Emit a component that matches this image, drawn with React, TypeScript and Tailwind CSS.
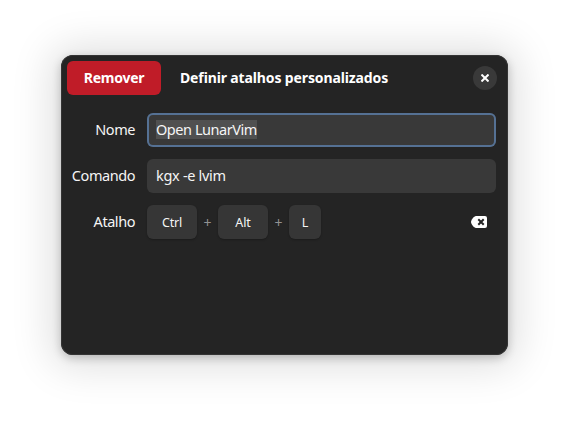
import React from "react";

function Label({ children }: { children: React.ReactNode }) {
  return <label className="w-[74px] shrink-0 pb-0.5 text-right whitespace-nowrap">{children}</label>;
}

function Key({ children, className }: { children: string; className: string }) {
  return (
    <kbd
      className={`flex h-[34px] items-center justify-center rounded-md bg-[#363636] pt-px font-[inherit] text-[12.5px] tracking-[-0.15px] shadow-[0_1px_2px_rgba(0,0,0,0.25)] ${className}`}
    >
      {children}
    </kbd>
  );
}

function Plus() {
  return <span className="w-[21px] pt-0.5 text-center text-[14px] tracking-normal text-[#929292]">+</span>;
}

export default function App() {
  return (
    <main className="h-[422px] w-[569px] overflow-hidden bg-white pt-[55px] pl-[61px] font-['Noto_Sans',sans-serif] text-[14.5px] leading-5 tracking-[-0.45px] text-[#f5f5f5] antialiased">
      <section className="h-[300px] w-[447px] rounded-xl bg-[#242424] shadow-[inset_0_0_0_1px_#343434,0_3px_10px_rgba(0,0,0,0.22),0_2px_40px_10px_rgba(0,0,0,0.13)]">
        <header className="flex h-[46px] items-center pr-[11px] pl-1.5 font-bold text-white">
          <button className="h-[34px] w-[94px] rounded-md bg-[#c01c28] text-[14px] tracking-[-0.25px]">Remover</button>
          <h1 className="ml-[19px] grow text-[14px] tracking-[-0.13px] whitespace-nowrap">Definir atalhos personalizados</h1>
          <button aria-label="Fechar" className="flex size-6 items-center justify-center rounded-full bg-[#393939]">
            <svg viewBox="0 0 8 8" className="size-2" stroke="white" strokeWidth="2" strokeLinecap="square">
              <path d="M1.2 1.2L6.8 6.8M6.8 1.2L1.2 6.8" />
            </svg>
          </button>
        </header>
        <div className="flex flex-col gap-3 pt-3 pr-3">
          <div className="flex items-center gap-3">
            <Label>Nome</Label>
            <div className="flex h-[34px] grow items-center rounded-md bg-[#393939] pb-0.5 pl-[9px] shadow-[inset_0_0_0_2px_#557194]">
              <span className="bg-[#505050] leading-[19px]">Open LunarVim</span>
            </div>
          </div>
          <div className="flex items-center gap-3">
            <Label>Comando</Label>
            <div className="flex h-[34px] grow items-center rounded-md bg-[#393939] pb-0.5 pl-[9px] tracking-[-0.3px]">kgx -e lvim</div>
          </div>
          <div className="flex items-center gap-3">
            <Label>Atalho</Label>
            <div className="flex grow items-center">
              <Key className="w-[50px]">Ctrl</Key>
              <Plus />
              <Key className="w-[50px]">Alt</Key>
              <Plus />
              <Key className="w-8">L</Key>
              <button aria-label="Limpar" className="mr-[9px] ml-auto">
                <svg viewBox="0 0 16 12" className="h-3 w-4">
                  <path fill="white" d="M5 0H14A2 2 0 0 1 16 2V10A2 2 0 0 1 14 12H5C3 12 0 8 0 6S3 0 5 0Z" />
                  <path d="M8 4L12 8M12 4L8 8" stroke="#242424" strokeWidth="2" strokeLinecap="square" />
                </svg>
              </button>
            </div>
          </div>
        </div>
      </section>
    </main>
  );
}
